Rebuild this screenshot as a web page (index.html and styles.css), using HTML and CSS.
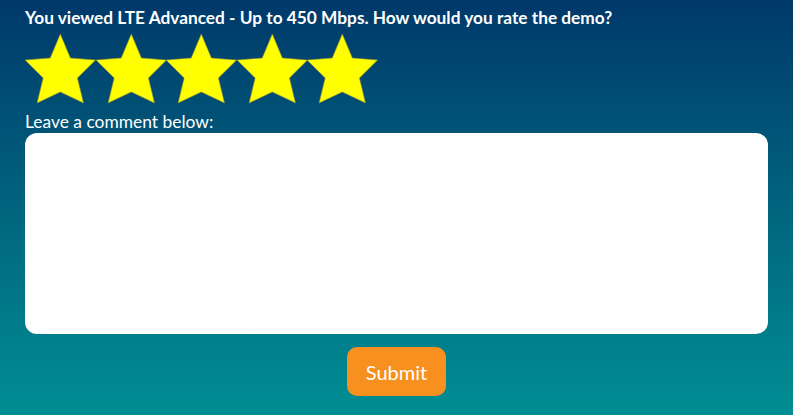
FILE: index.html
```html
<!DOCTYPE html>
<html lang="en">
  <head>
    <meta charset="UTF-8" />
    <meta name="viewport" content="width=device-width, initial-scale=1.0" />
    <title>Rate the demo</title>
    <link rel="stylesheet" href="styles.css">
  </head>
  <body>
    <div class="container">
      <h1 class="question">
        You viewed LTE Advanced - Up to 450 Mbps. How would you rate the demo?
      </h1>

      <!-- Rating stars -->
      <div class="stars">
        <svg class="star" viewBox="0 0 70 70" preserveAspectRatio="none"><polygon points="35,0 45,24 70,26 52,44 58,69 35,58 12,69 18,44 0,26 25,24" /></svg>
        <svg class="star" viewBox="0 0 70 70" preserveAspectRatio="none"><polygon points="35,0 45,24 70,26 52,44 58,69 35,58 12,69 18,44 0,26 25,24" /></svg>
        <svg class="star" viewBox="0 0 70 70" preserveAspectRatio="none"><polygon points="35,0 45,24 70,26 52,44 58,69 35,58 12,69 18,44 0,26 25,24" /></svg>
        <svg class="star" viewBox="0 0 70 70" preserveAspectRatio="none"><polygon points="35,0 45,24 70,26 52,44 58,69 35,58 12,69 18,44 0,26 25,24" /></svg>
        <svg class="star" viewBox="0 0 70 70" preserveAspectRatio="none"><polygon points="35,0 45,24 70,26 52,44 58,69 35,58 12,69 18,44 0,26 25,24" /></svg>
      </div>

      <label for="comment" class="comment-label">Leave a comment below:</label>
      <textarea id="comment" class="comment"></textarea>

      <button class="btn-submit">Submit</button>
    </div>
  </body>
</html>
```

FILE: styles.css
```css
html,
body {
  height: 100%;
}

body {
  font-family: "Lato", "Open Sans", sans-serif;
  margin: 0;
  color: #ffffff;
  background: linear-gradient(#00396a, #008e93);
}

/* Container styles */
.container {
  display: flex;
  flex-direction: column;
  padding: 6px 25px 0;
}

.question {
  margin: 0;
  font-size: 17.3px;
  font-weight: bold;
  line-height: 24px;
}

/* Stars */
.stars {
  display: flex;
  margin-top: 4px;
}

.star {
  width: 70.6px;
  height: 70px;
  display: block;
}

.star polygon {
  fill: #ffff00;
  stroke: #8c8c3c;
  stroke-width: 0.6;
}

/* Comment */
.comment-label {
  font-size: 17.4px;
  line-height: 22px;
  margin-top: 7px;
}

.comment {
  height: 201px;
  border: none;
  border-radius: 12px;
  background: #ffffff;
  resize: none;
  box-sizing: border-box;
  padding: 10px;
  font-family: inherit;
  font-size: 16px;
}

/* Button */
.btn-submit {
  align-self: center;
  margin-top: 13px;
  width: 99px;
  height: 49px;
  border: none;
  border-radius: 10px;
  background-color: #f7901e;
  color: #ffffff;
  font-family: inherit;
  font-size: 20px;
  cursor: pointer;
}
```
